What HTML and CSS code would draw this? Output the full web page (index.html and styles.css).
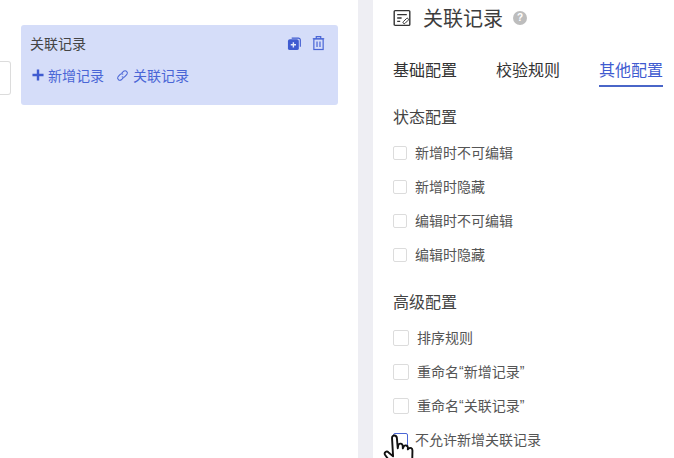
FILE: index.html
```html
<!DOCTYPE html>
<html lang="zh">
<head>
<meta charset="utf-8">
<title>关联记录</title>
<link rel="stylesheet" href="styles.css">
</head>
<body>
<div class="app">
  <section class="canvas">
    <div class="stub"></div>
    <div class="card">
      <div class="card-head">
        <span class="card-title">关联记录</span>
        <span class="card-tools">
          <svg class="tool" width="15" height="15" viewBox="0 0 16 16"><path d="M5 2.2h7.2a2 2 0 0 1 2 2v7.3" fill="none" stroke="#3f5bd0" stroke-width="1.2"/><rect x="1" y="3.4" width="11.6" height="11.6" rx="2" fill="#3f5bd0"/><path d="M6.8 6.6v5.6M4 9.4h5.6" stroke="#e4e9fb" stroke-width="1.5"/></svg>
          <svg class="tool" width="13" height="16" viewBox="0 0 14 16"><path d="M.8 3.4h12.4M4.6 3.2V1.2h4.8v2" fill="none" stroke="#4a66d6" stroke-width="1.3"/><rect x="2" y="3.6" width="10" height="11.4" fill="none" stroke="#4a66d6" stroke-width="1.3"/><path d="M5.4 6.4v6M8.6 6.4v6" stroke="#4a66d6" stroke-width="1.3"/></svg>
        </span>
      </div>
      <div class="card-actions">
        <span class="action"><svg width="12" height="12" viewBox="0 0 13 13"><path d="M6.5.5v12M.5 6.5h12" stroke="#3f5bd0" stroke-width="2.6"/></svg>新增记录</span>
        <span class="action"><svg width="13" height="13" viewBox="0 0 14 14" fill="none" stroke="#4a66d6" stroke-width="1.1"><path d="M6 4.6 8.2 2.4a2.5 2.5 0 0 1 3.5 3.5L9.5 8.1a2.5 2.5 0 0 1-3.3.2"/><path d="M8 9.4 5.8 11.6a2.5 2.5 0 0 1-3.5-3.5l2.2-2.2a2.5 2.5 0 0 1 3.3-.2"/></svg>关联记录</span>
      </div>
    </div>
  </section>
  <div class="gutter"></div>
  <aside class="panel">
    <header class="panel-head">
      <svg width="18" height="18" viewBox="0 0 18 18" fill="none" stroke="#333" stroke-width="1.4"><rect x="1.2" y="1.6" width="15.6" height="14.8" rx="1"/><path d="M4.2 5.6h9.6M4.2 9h4.4M4.2 12.4h3"/><path d="M10.4 12.6l3-3a1.2 1.2 0 0 1 1.7 1.7l-3 3a1.2 1.2 0 0 1-1.7-1.7z" stroke-width="1"/></svg>
      <h1 class="panel-title">关联记录</h1>
      <span class="help">?</span>
    </header>
    <nav class="tabs">
      <span class="tab">基础配置</span>
      <span class="tab">校验规则</span>
      <span class="tab active">其他配置</span>
    </nav>
    <h2 class="group-title">状态配置</h2>
    <ul class="checks">
      <li class="check"><i class="box"></i>新增时不可编辑</li>
      <li class="check"><i class="box"></i>新增时隐藏</li>
      <li class="check"><i class="box"></i>编辑时不可编辑</li>
      <li class="check"><i class="box"></i>编辑时隐藏</li>
    </ul>
    <h2 class="group-title second">高级配置</h2>
    <ul class="checks large">
      <li class="check"><i class="box"></i>排序规则</li>
      <li class="check"><i class="box"></i>重命名<span class="quote">“</span>新增记录<span class="quote">”</span></li>
      <li class="check"><i class="box"></i>重命名<span class="quote">“</span>关联记录<span class="quote">”</span></li>
      <li class="check hover"><i class="box"></i>不允许新增关联记录</li>
    </ul>
    <svg class="cursor" width="38" height="36" viewBox="0 0 32 30"><path d="M9 28 1.8 18.4c-1.3-2.2 1.2-3.8 2.9-2.2L8.5 19.5 7.6 4.2c-.1-3 3.9-3 4.1 0l.7 8.5.4-2.2c.5-2.5 3.7-2.2 3.8.3l.1 2 .6-1.3c.9-2 3.7-1.3 3.7.8l-.1 1.3.7-.7c1.4-1.2 3.3-.2 3.2 1.8L24.5 28z" fill="#fff" stroke="#111" stroke-width="1.6" stroke-linejoin="round"/><path d="M12.5 21.5V29M16.5 21.5V29M20.5 21.5V29" stroke="#111" stroke-width="1.4"/></svg>
  </aside>
</div>
</body>
</html>
```
FILE: styles.css
```css
* { box-sizing: border-box; }
html, body { margin: 0; padding: 0; background: #fff; }
body { font-family: "Noto Sans CJK SC", "Liberation Sans", sans-serif; color: #3d3d3d; }
.app { display: flex; width: 674px; height: 458px; overflow: hidden; }

.canvas { width: 358px; flex: none; display: flex; align-items: flex-start; gap: 10px; padding-top: 25px; background: #fff; }
.stub { width: 11px; height: 34px; margin-top: 36px; border: 1px solid #dcdcdc; border-left: 0; border-radius: 0 3px 3px 0; flex: none; }
.card { width: 317px; height: 80px; background: #d5ddf9; border-radius: 3px; padding: 7px 13px 0 9px; }
.card-head { display: flex; justify-content: space-between; align-items: center; height: 22px; }
.card-title { font-size: 14px; line-height: 22px; color: #444; }
.card-tools { display: flex; align-items: center; gap: 10px; }
.tool { display: block; }
.card-actions { display: flex; gap: 12px; margin-top: 10px; padding-left: 2px; }
.action { display: flex; align-items: center; gap: 4px; font-size: 14px; line-height: 22px; color: #4a66d6; }

.gutter { width: 15px; flex: none; background: #eeeef3; }

.panel { position: relative; flex: 1; min-width: 0; padding: 0 0 0 20px; background: #fff; }
.panel-head { display: flex; align-items: center; height: 36px; color: #3d3d3d; }
.panel-title { margin: 0 10px 0 12px; font-size: 20px; font-weight: 400; line-height: 36px; }
.help { width: 14px; height: 14px; border-radius: 50%; background: #bdbdbd; color: #fff; font-size: 10px; line-height: 14px; text-align: center; font-weight: 700; font-family: "Liberation Sans", sans-serif; }

.tabs { display: flex; gap: 39px; margin-top: 15px; }
.tab { height: 36px; font-size: 16px; line-height: 36px; color: #333; }
.tab.active { color: #3f5bd0; border-bottom: 2px solid #4a66c8; }

.group-title { margin: 15px 0 0; font-size: 16px; font-weight: 400; line-height: 28px; color: #444; }
.group-title.second { margin-top: 16px; }

.checks { list-style: none; margin: 5px 0 0; padding: 0; }
.check { display: flex; align-items: center; height: 34px; font-size: 14px; line-height: 34px; color: #555; }
.box { width: 14px; height: 14px; margin: 2px 8px 0 0; flex: none; background: #fff; border: 1px solid #dcdcdc; border-radius: 2px; }
.large .box { width: 16px; height: 16px; }
.hover .box { width: 15px; height: 15px; margin-right: 7px; border-color: #4a66d6; }
.quote { font-family: "Liberation Sans", sans-serif; font-size: 14px; }

.cursor { position: absolute; left: 10px; top: 433px; }
```
